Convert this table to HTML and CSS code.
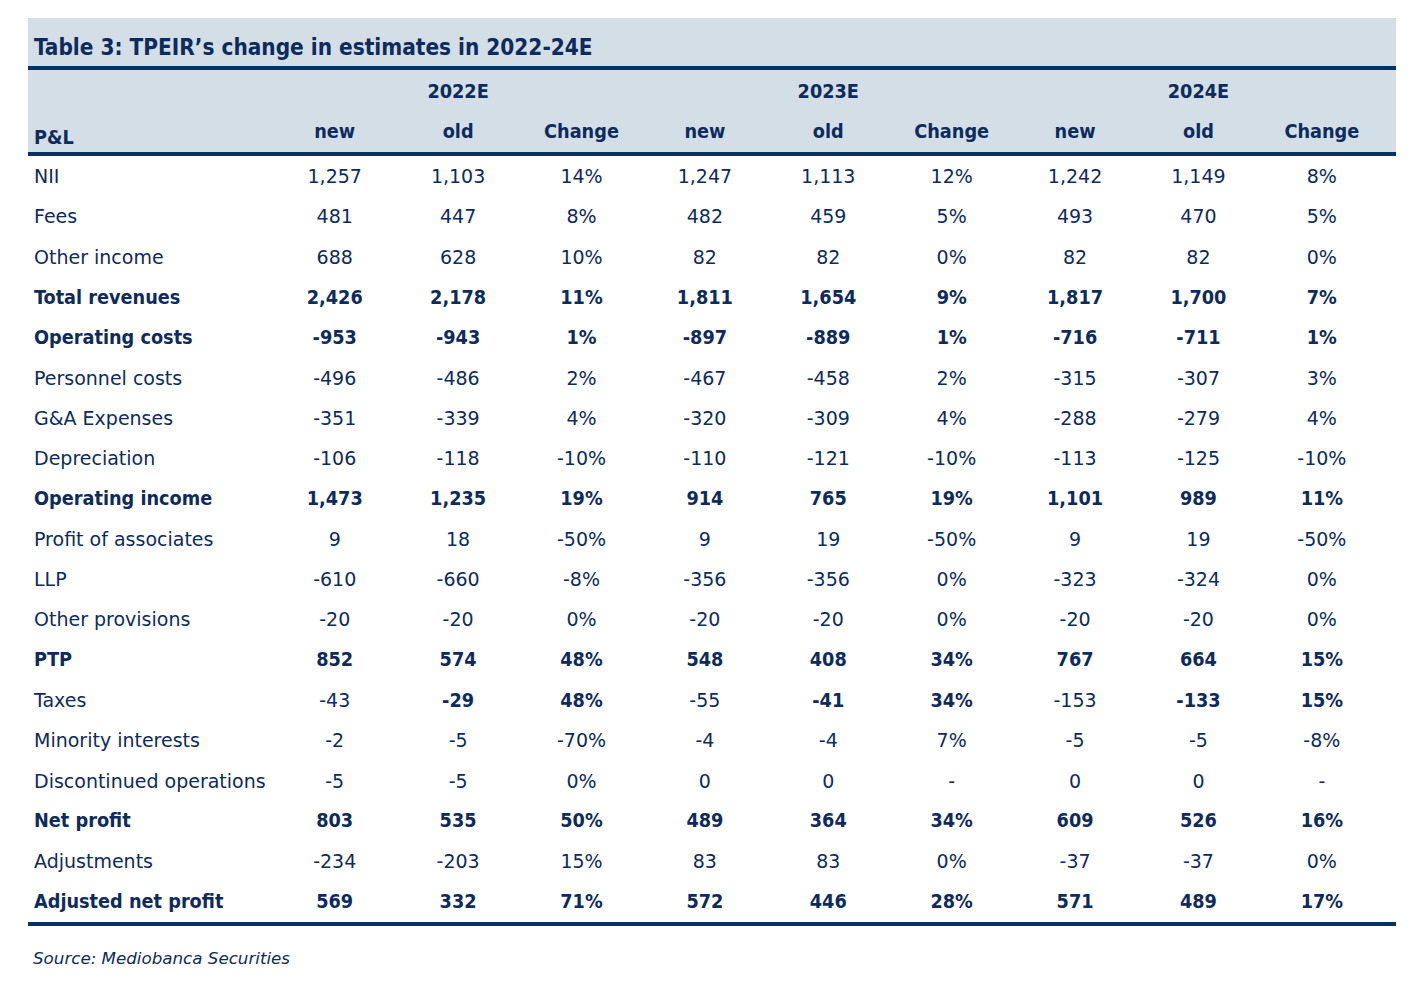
FILE: index.html
```html
<!DOCTYPE html>
<html>
<head>
<meta charset="utf-8">
<link rel="stylesheet" href="styles.css">
</head>
<body>
<div class="wrap">
  <div class="title">Table 3: TPEIR’s change in estimates in 2022-24E</div>
  <table class="tbl">
    <colgroup>
      <col class="c-label">
      <col class="c-num"><col class="c-num"><col class="c-num">
      <col class="c-num"><col class="c-num"><col class="c-num">
      <col class="c-num"><col class="c-num"><col class="c-num">
      <col class="c-pad">
    </colgroup>
    <thead>
      <tr class="h-year">
        <th></th>
        <th colspan="3">2022E</th>
        <th colspan="3">2023E</th>
        <th colspan="3">2024E</th>
        <th></th>
      </tr>
      <tr class="h-sub">
        <th class="lbl">P&amp;L</th>
        <th>new</th><th>old</th><th>Change</th>
        <th>new</th><th>old</th><th>Change</th>
        <th>new</th><th>old</th><th>Change</th>
        <th></th>
      </tr>
    </thead>
    <tbody>
      <tr><td>NII</td><td>1,257</td><td>1,103</td><td>14%</td><td>1,247</td><td>1,113</td><td>12%</td><td>1,242</td><td>1,149</td><td>8%</td><td></td></tr>
      <tr><td>Fees</td><td>481</td><td>447</td><td>8%</td><td>482</td><td>459</td><td>5%</td><td>493</td><td>470</td><td>5%</td><td></td></tr>
      <tr><td>Other income</td><td>688</td><td>628</td><td>10%</td><td>82</td><td>82</td><td>0%</td><td>82</td><td>82</td><td>0%</td><td></td></tr>
      <tr class="b"><td>Total revenues</td><td>2,426</td><td>2,178</td><td>11%</td><td>1,811</td><td>1,654</td><td>9%</td><td>1,817</td><td>1,700</td><td>7%</td><td></td></tr>
      <tr class="b"><td>Operating costs</td><td>-953</td><td>-943</td><td>1%</td><td>-897</td><td>-889</td><td>1%</td><td>-716</td><td>-711</td><td>1%</td><td></td></tr>
      <tr><td>Personnel costs</td><td>-496</td><td>-486</td><td>2%</td><td>-467</td><td>-458</td><td>2%</td><td>-315</td><td>-307</td><td>3%</td><td></td></tr>
      <tr><td>G&amp;A Expenses</td><td>-351</td><td>-339</td><td>4%</td><td>-320</td><td>-309</td><td>4%</td><td>-288</td><td>-279</td><td>4%</td><td></td></tr>
      <tr><td>Depreciation</td><td>-106</td><td>-118</td><td>-10%</td><td>-110</td><td>-121</td><td>-10%</td><td>-113</td><td>-125</td><td>-10%</td><td></td></tr>
      <tr class="b"><td>Operating income</td><td>1,473</td><td>1,235</td><td>19%</td><td>914</td><td>765</td><td>19%</td><td>1,101</td><td>989</td><td>11%</td><td></td></tr>
      <tr><td>Profit of associates</td><td>9</td><td>18</td><td>-50%</td><td>9</td><td>19</td><td>-50%</td><td>9</td><td>19</td><td>-50%</td><td></td></tr>
      <tr><td>LLP</td><td>-610</td><td>-660</td><td>-8%</td><td>-356</td><td>-356</td><td>0%</td><td>-323</td><td>-324</td><td>0%</td><td></td></tr>
      <tr><td>Other provisions</td><td>-20</td><td>-20</td><td>0%</td><td>-20</td><td>-20</td><td>0%</td><td>-20</td><td>-20</td><td>0%</td><td></td></tr>
      <tr class="b"><td>PTP</td><td>852</td><td>574</td><td>48%</td><td>548</td><td>408</td><td>34%</td><td>767</td><td>664</td><td>15%</td><td></td></tr>
      <tr><td>Taxes</td><td>-43</td><td class="bb">-29</td><td class="bb">48%</td><td>-55</td><td class="bb">-41</td><td class="bb">34%</td><td>-153</td><td class="bb">-133</td><td class="bb">15%</td><td></td></tr>
      <tr><td>Minority interests</td><td>-2</td><td>-5</td><td>-70%</td><td>-4</td><td>-4</td><td>7%</td><td>-5</td><td>-5</td><td>-8%</td><td></td></tr>
      <tr><td>Discontinued operations</td><td>-5</td><td>-5</td><td>0%</td><td>0</td><td>0</td><td>-</td><td>0</td><td>0</td><td>-</td><td></td></tr>
      <tr class="b"><td>Net profit</td><td>803</td><td>535</td><td>50%</td><td>489</td><td>364</td><td>34%</td><td>609</td><td>526</td><td>16%</td><td></td></tr>
      <tr><td>Adjustments</td><td>-234</td><td>-203</td><td>15%</td><td>83</td><td>83</td><td>0%</td><td>-37</td><td>-37</td><td>0%</td><td></td></tr>
      <tr class="b"><td>Adjusted net profit</td><td>569</td><td>332</td><td>71%</td><td>572</td><td>446</td><td>28%</td><td>571</td><td>489</td><td>17%</td><td></td></tr>
    </tbody>
  </table>
  <div class="source">Source: Mediobanca Securities</div>
</div>
</body>
</html>
```

FILE: styles.css
```css
html, body {
  margin: 0;
  padding: 0;
  background: #ffffff;
}

body {
  font-family: "DejaVu Sans", sans-serif;
  color: #0d2b5c;
}

.wrap {
  padding: 18px 0 0 28px;
  width: 1368px;
}

.title {
  background: #d3dee6;
  box-sizing: border-box;
  height: 52px;
  padding: 15px 0 0 6px;
  font-family: "DejaVu Sans Condensed", "DejaVu Sans", sans-serif;
  font-size: 22.4px;
  font-weight: bold;
  line-height: 28px;
  border-bottom: 4px solid #003466;
}

.tbl {
  width: 1368px;
  border-collapse: collapse;
  table-layout: fixed;
  font-size: 19px;
}

.c-label { width: 245px; }
.c-num { width: 123.4px; }
.c-pad { width: 12.4px; }

thead tr {
  background: #d3dee6;
}

thead th {
  font-family: "DejaVu Sans Condensed", "DejaVu Sans", sans-serif;
  font-size: 19.7px;
  font-weight: bold;
  text-align: center;
  padding: 0;
}

.h-year th {
  height: 42px;
  vertical-align: middle;
}

.h-sub th {
  height: 38px;
  vertical-align: middle;
  padding-bottom: 2px;
  border-bottom: 4px solid #003466;
}

.h-sub th.lbl {
  text-align: left;
  padding-left: 6px;
  vertical-align: bottom;
  padding-bottom: 3px;
  height: 37px;
}

tbody td {
  height: 40.3px;
  padding: 0;
  text-align: center;
  vertical-align: middle;
}

tbody td:first-child {
  text-align: left;
  padding-left: 6px;
}

tbody tr.b td,
tbody td.bb {
  font-family: "DejaVu Sans Condensed", "DejaVu Sans", sans-serif;
  font-size: 19.7px;
  font-weight: bold;
}

tbody tr:last-child td {
  border-bottom: 4px solid #003466;
}

.source {
  font-style: italic;
  font-size: 16.7px;
  padding: 22px 0 0 5px;
}
```
